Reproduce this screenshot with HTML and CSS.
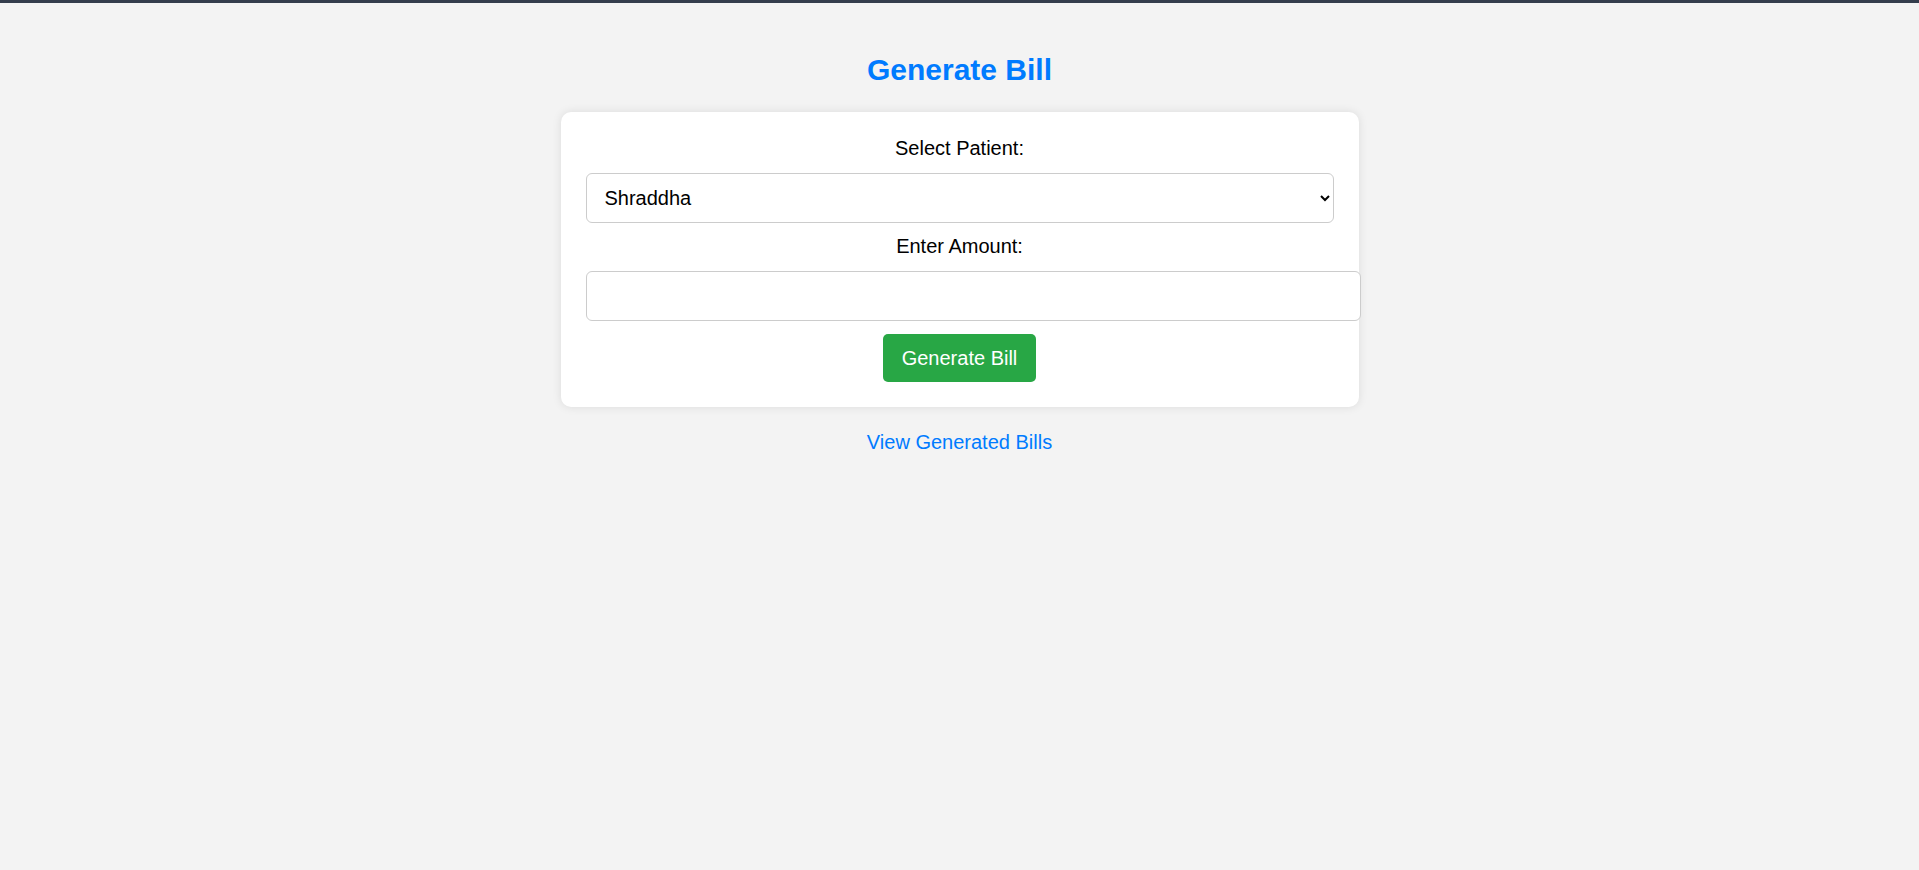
FILE: index.html
```html
<!DOCTYPE html>
<html lang="en">
<head>
<meta charset="utf-8">
<title>Generate Bill</title>
<link rel="stylesheet" href="styles.css">
</head>
<body>
<div class="topbar"></div>
<main class="page">
  <h2 class="title">Generate Bill</h2>
  <form class="card">
    <label class="label" for="patient">Select Patient:</label>
    <select id="patient" class="select">
      <option>Shraddha</option>
    </select>
    <label class="label" for="amount">Enter Amount:</label>
    <input id="amount" class="input" type="number">
    <button type="button" class="btn">Generate Bill</button>
  </form>
  <a class="link" href="#">View Generated Bills</a>
</main>
</body>
</html>
```

FILE: styles.css
```css
html, body {
  margin: 0;
  padding: 0;
}
body {
  background: #f3f3f3;
  font-family: "Liberation Sans", Arial, sans-serif;
  font-size: 20px;
  color: #000;
}
.topbar {
  height: 3px;
  background: #343d4c;
}
.page {
  display: flex;
  flex-direction: column;
  align-items: center;
  padding: 24px 0;
}
.title {
  margin: 25px 0 25px;
  font-size: 30px;
  font-weight: bold;
  color: #007bff;
  line-height: 35px;
}
.card {
  box-sizing: border-box;
  width: 798px;
  background: #fff;
  border-radius: 10px;
  box-shadow: 0 0 10px rgba(0, 0, 0, 0.1);
  padding: 25px;
  display: flex;
  flex-direction: column;
  align-items: stretch;
  gap: 12.5px;
}
.label {
  display: block;
  text-align: center;
  line-height: 23px;
}
.select {
  box-sizing: border-box;
  width: 100%;
  height: 50px;
  padding: 0 8px 0 14px;
  font-family: "Liberation Sans", Arial, sans-serif;
  font-size: 20px;
  color: #000;
  background: #fff;
  border: 1px solid #cccccc;
  border-radius: 6px;
}
.input {
  box-sizing: content-box;
  width: 100%;
  height: 23px;
  padding: 12.5px;
  margin: 0;
  font-family: "Liberation Sans", Arial, sans-serif;
  font-size: 20px;
  border: 1px solid #cccccc;
  border-radius: 6px;
  background: #fff;
}
.btn {
  align-self: center;
  margin-top: 1px;
  height: 48px;
  padding: 0 19px;
  border: none;
  border-radius: 5px;
  background: #28a745;
  color: #fff;
  font-family: "Liberation Sans", Arial, sans-serif;
  font-size: 20px;
  line-height: 23px;
  cursor: pointer;
}
.link {
  margin-top: 24px;
  color: #007bff;
  text-decoration: none;
  line-height: 23px;
}
```
